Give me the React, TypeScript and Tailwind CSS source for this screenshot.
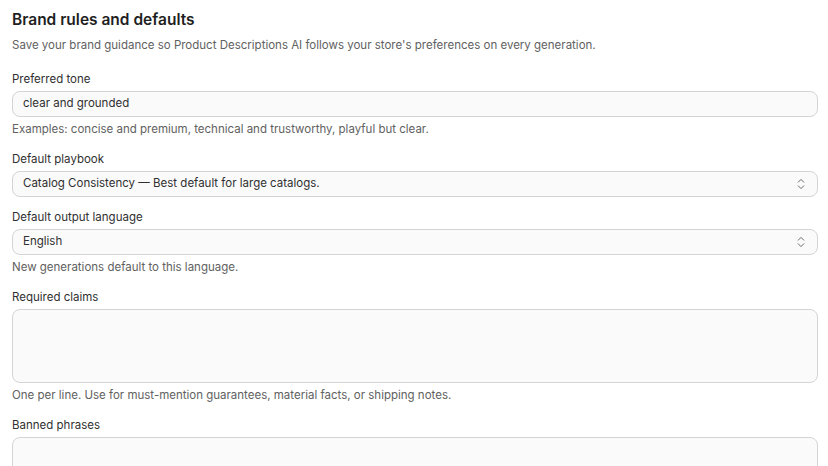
const Chevrons = () => (
  <svg width="10" height="14" viewBox="0 0 10 14" fill="none" className="shrink-0">
    <path d="M2.2 5.2 5 2.4 7.8 5.2" stroke="#6b6b6b" strokeWidth="1" strokeLinecap="round" strokeLinejoin="round" />
    <path d="M2.2 8.8 5 11.6 7.8 8.8" stroke="#6b6b6b" strokeWidth="1" strokeLinecap="round" strokeLinejoin="round" />
  </svg>
);

const Label = ({ children }: { children: string }) => (
  <label className="block text-[11.5px] leading-[18px] text-[#303030] mb-[3px]">{children}</label>
);

const Help = ({ children }: { children: string }) => (
  <p className="mt-[3px] text-[11.5px] leading-[18px] text-[#616161]">{children}</p>
);

const boxClass = "w-full rounded-lg border border-[#d4d4d4] bg-[#fafafa]";

const TextInput = ({ value }: { value: string }) => (
  <div className={`${boxClass} h-[26px] flex items-center px-[10px] text-[11.5px] text-[#303030]`}>{value}</div>
);

const Select = ({ value }: { value: string }) => (
  <div className={`${boxClass} h-[26px] flex items-center justify-between pl-[10px] pr-[11px] text-[11.5px] text-[#303030]`}>
    <span>{value}</span>
    <Chevrons />
  </div>
);

const TextArea = () => <div className={`${boxClass} h-[74px]`} />;

export default function App() {
  return (
    <div className="min-h-screen bg-white pl-3 pr-[10px] pt-[9px] font-['Inter',sans-serif] antialiased overflow-hidden h-[466px]">
      <h1 className="text-[15.5px] leading-[22px] font-semibold text-[#1f1f1f]">Brand rules and defaults</h1>
      <p className="mt-[5px] text-[11.5px] leading-[18px] text-[#616161]">
        Save your brand guidance so Product Descriptions AI follows your store's preferences on every generation.
      </p>

      <div className="mt-[16px] flex flex-col gap-[12px]">
        <div>
          <Label>Preferred tone</Label>
          <TextInput value="clear and grounded" />
          <Help>Examples: concise and premium, technical and trustworthy, playful but clear.</Help>
        </div>
        <div>
          <Label>Default playbook</Label>
          <Select value="Catalog Consistency — Best default for large catalogs." />
        </div>
        <div className="-mt-px">
          <Label>Default output language</Label>
          <Select value="English" />
          <Help>New generations default to this language.</Help>
        </div>
        <div>
          <Label>Required claims</Label>
          <TextArea />
          <Help>One per line. Use for must-mention guarantees, material facts, or shipping notes.</Help>
        </div>
        <div>
          <Label>Banned phrases</Label>
          <TextArea />
        </div>
      </div>
    </div>
  );
}
